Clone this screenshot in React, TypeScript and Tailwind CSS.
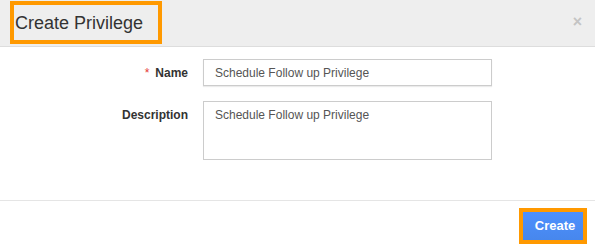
export default function App() {
  return (
    <div className="w-[595px] h-[250px] bg-white overflow-hidden font-['Liberation_Sans',Arial,sans-serif] text-[#333]">
      <div className="h-[47px] bg-[#eeeeee] border-b border-[#dddddd] flex items-start justify-between">
        <div className="ml-[10px] mt-[1px] w-[152px] h-[43px] border-4 border-[#ff9900] flex items-center pl-[1px] pt-[1px] text-[18px] text-[#333] leading-none whitespace-nowrap">
          Create Privilege
        </div>
        <div className="mr-[13px] mt-[14px] text-[#c4c4c4] text-[16px] font-bold leading-none">×</div>
      </div>
      <div className="h-[153px] pt-[12px] flex flex-col gap-[15px]">
        <div className="flex items-center">
          <label className="w-[188px] text-right text-[12px] font-bold">
            <span className="text-[#e53935] font-normal mr-[6px]">*</span>Name
          </label>
          <input
            className="ml-[15px] w-[289px] h-[27px] border border-[#cccccc] shadow-[0_1px_1px_rgba(0,0,0,0.08)] px-[11px] text-[12px] text-[#555] outline-none"
            defaultValue="Schedule Follow up Privilege"
          />
        </div>
        <div className="flex items-start">
          <label className="w-[188px] text-right text-[12px] font-bold pt-[5px]">Description</label>
          <textarea
            className="ml-[15px] w-[289px] h-[59px] border border-[#cccccc] px-[11px] py-[4px] text-[12px] text-[#555] outline-none resize-none"
            defaultValue="Schedule Follow up Privilege"
          />
        </div>
      </div>
      <div className="border-t border-[#e5e5e5] h-[50px] flex items-start justify-end pr-[8px] pt-[7px]">
        <button className="w-[68px] h-[36px] border-4 border-[#ff9900] bg-gradient-to-b from-[#4d90fe] to-[#4787ed] text-white text-[13px] font-bold pl-[4px]">
          Create
        </button>
      </div>
    </div>
  );
}
